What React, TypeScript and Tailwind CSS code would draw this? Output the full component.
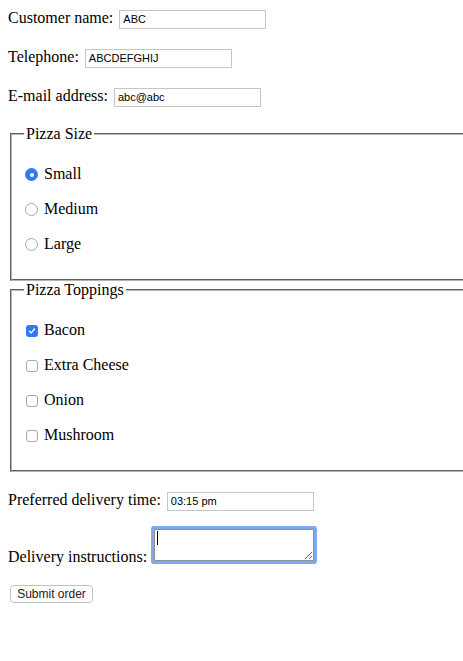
import React from "react";

const serif = { fontFamily: '"Liberation Serif", "Times New Roman", serif' };

function TextBox({ value, width = 147 }: { value: string; width?: number }) {
  return (
    <div
      className="mt-[2px] h-[19px] border border-[#c6c6c6] bg-white pl-[3px] text-[11px] leading-[17px] text-black"
      style={{ width, fontFamily: '"Liberation Sans", Arial, sans-serif' }}
    >
      {value}
    </div>
  );
}

function Radio({ checked }: { checked?: boolean }) {
  return checked ? (
    <span className="ml-[1px] mt-[4px] flex h-[13px] w-[13px] shrink-0 items-center justify-center rounded-full bg-[#3478f6]">
      <span className="h-[4px] w-[4px] rounded-full bg-white" />
    </span>
  ) : (
    <span className="ml-[1px] mt-[4px] h-[13px] w-[13px] shrink-0 rounded-full border border-[#a8a8a8] bg-white" />
  );
}

function Check({ checked }: { checked?: boolean }) {
  return checked ? (
    <span className="ml-[2px] mt-[5px] flex h-[12px] w-[12px] shrink-0 items-center justify-center rounded-[3px] bg-[#3478f6]">
      <svg width="8" height="8" viewBox="0 0 8 8">
        <path d="M1.5 4.2 L3.2 5.9 L6.5 2" fill="none" stroke="white" strokeWidth="1.4" strokeLinecap="round" strokeLinejoin="round" />
      </svg>
    </span>
  ) : (
    <span className="ml-[2px] mt-[5px] h-[12px] w-[12px] shrink-0 rounded-[3px] border border-[#a8a8a8] bg-white" />
  );
}

function Option({ control, label }: { control: React.ReactNode; label: string }) {
  return (
    <div className="flex h-[35px] items-start gap-[6px]">
      {control}
      <span className="leading-[20px]">{label}</span>
    </div>
  );
}

export default function App() {
  return (
    <div className="min-h-[661px] w-[463px] overflow-hidden bg-white text-[16px] text-black" style={serif}>
      <div className="p-[8px] pr-0">
        <div className="flex h-[39px] items-start gap-[6px]">
          <span className="leading-[20px]">Customer name:</span>
          <TextBox value="ABC" />
        </div>
        <div className="flex h-[39px] items-start gap-[6px]">
          <span className="leading-[20px]">Telephone:</span>
          <TextBox value="ABCDEFGHIJ" />
        </div>
        <div className="flex h-[39px] items-start gap-[6px]">
          <span className="leading-[20px]">E-mail address:</span>
          <TextBox value="abc@abc" />
        </div>

        <fieldset className="ml-[2px] border-2 border-r-0 border-[#b4b4b4] px-[12px] pb-[10px] pt-[21px] [border-style:groove]">
          <legend className="px-[2px] leading-[18px]">Pizza Size</legend>
          <Option control={<Radio checked />} label="Small" />
          <Option control={<Radio />} label="Medium" />
          <Option control={<Radio />} label="Large" />
        </fieldset>

        <fieldset className="ml-[2px] border-2 border-r-0 border-[#b4b4b4] px-[12px] pb-[10px] pt-[21px] [border-style:groove]">
          <legend className="px-[2px] leading-[18px]">Pizza Toppings</legend>
          <Option control={<Check checked />} label="Bacon" />
          <Option control={<Check />} label="Extra Cheese" />
          <Option control={<Check />} label="Onion" />
          <Option control={<Check />} label="Mushroom" />
        </fieldset>

        <div className="mt-[18px] flex items-start gap-[6px]">
          <span className="leading-[20px]">Preferred delivery time:</span>
          <TextBox value="03:15 pm" />
        </div>

        <div className="mt-[18px] flex items-end gap-[7px]">
          <span className="leading-[20px]">Delivery instructions:</span>
          <div className="relative mb-[6px]">
            <textarea
              className="block h-[32px] w-[160px] resize rounded-[1px] border border-[#8e8e8e] bg-white outline-none ring-[3px] ring-[#7fa8f3]"
              defaultValue=""
            />
            <span className="absolute left-[3px] top-[2px] h-[14px] w-[1px] bg-black" />
          </div>
        </div>

        <button
          className="ml-[2px] mt-[18px] flex h-[18px] w-[83px] items-center justify-center rounded-[4px] border border-[#c2c2c2] bg-white text-[12px] leading-none text-[#222]"
          style={{ fontFamily: '"Liberation Sans", Arial, sans-serif' }}
        >
          Submit order
        </button>
      </div>
    </div>
  );
}
